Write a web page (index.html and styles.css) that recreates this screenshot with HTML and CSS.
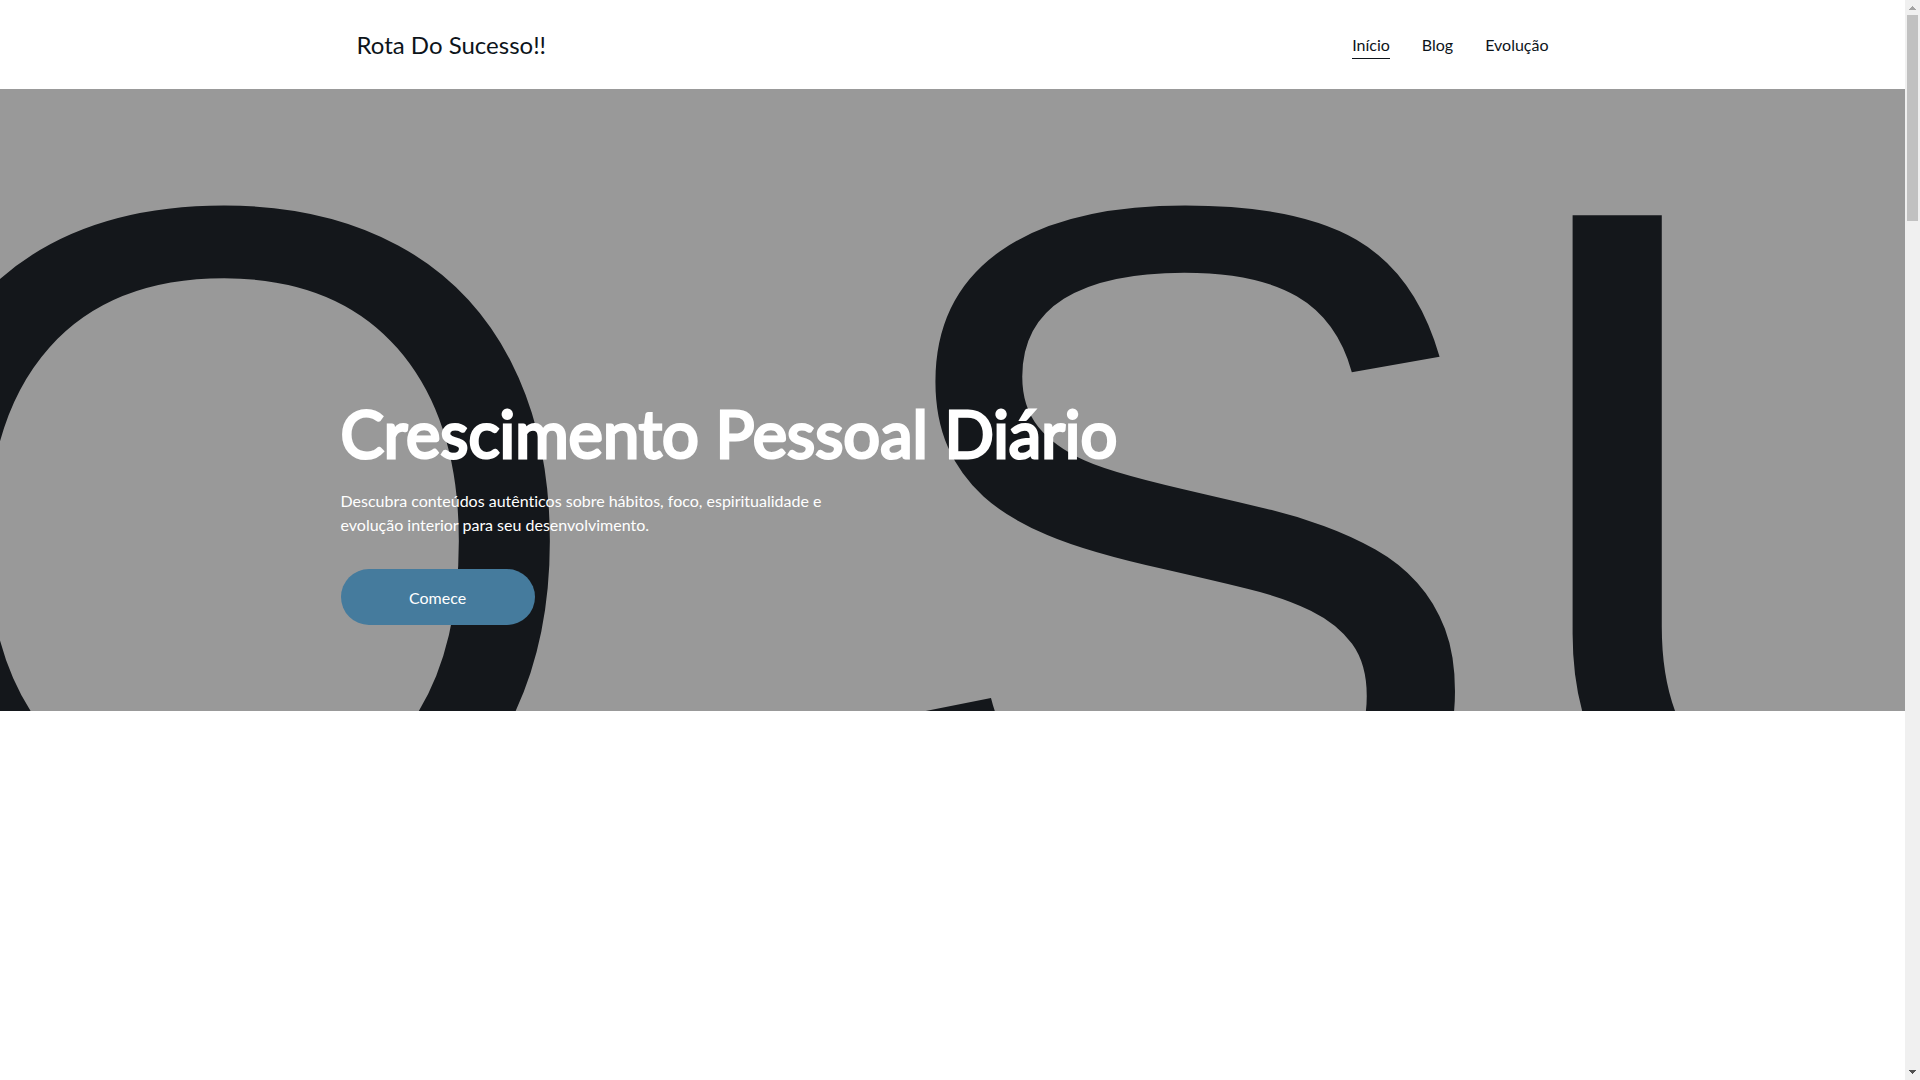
FILE: index.html
```html
<!DOCTYPE html>
<html lang="pt-BR">
<head>
<meta charset="utf-8">
<meta name="viewport" content="width=device-width, initial-scale=1">
<title>Rota Do Sucesso!!</title>
<link rel="stylesheet" href="styles.css">
</head>
<body>
<div class="page">
  <header class="header">
    <div class="container header-inner">
      <a class="logo" href="#">Rota Do Sucesso!!</a>
      <nav class="nav">
        <a class="nav-link active" href="#" aria-current="page">Início</a>
        <a class="nav-link" href="#">Blog</a>
        <a class="nav-link" href="#">Evolução</a>
      </nav>
    </div>
  </header>
  <main>
    <section class="hero">
      <div class="hero-backdrop" aria-hidden="true">O SU</div>
      <div class="container hero-content">
        <h1 class="hero-title">Crescimento Pessoal Diário</h1>
        <p class="hero-text">Descubra conteúdos autênticos sobre hábitos, foco, espiritualidade e evolução interior para seu desenvolvimento.</p>
        <button class="hero-button" type="button">Comece</button>
      </div>
    </section>
  </main>
</div>
<div class="scrollbar" aria-hidden="true">
  <svg class="arrow" width="15" height="15" viewBox="0 0 15 15" shape-rendering="crispEdges"><path fill="#a3a3a3" d="M7 6h1v1h1v1h1v1h1v1H4V9h1V8h1V7h1z"/></svg>
  <div class="thumb"></div>
  <svg class="arrow arrow-down" width="15" height="15" viewBox="0 0 15 15" shape-rendering="crispEdges"><path fill="#505050" d="M4 5h7v1h-1v1H9v1H8v1H7V8H6V7H5V6H4z"/></svg>
</div>
</body>
</html>
```
FILE: styles.css
```css
* {
  box-sizing: border-box;
}

body {
  margin: 0;
  display: grid;
  grid-template-columns: minmax(0, 1fr) 15px;
  height: 100vh;
  overflow: hidden;
  background: #fff;
  color: #0d141a;
  font-family: Lato, "Liberation Sans", sans-serif;
  font-size: 16px;
  line-height: 24px;
  font-variant-ligatures: none;
}

.container {
  width: 100%;
  max-width: 1224px;
  margin: 0 auto;
}

.header-inner {
  display: flex;
  align-items: center;
  justify-content: space-between;
  padding: 28px 16px;
}

.logo {
  color: inherit;
  font-size: 24px;
  line-height: 33px;
  text-decoration: none;
}

.nav {
  display: flex;
  gap: 32px;
}

.nav-link {
  color: inherit;
  text-decoration: none;
  border-bottom: 1px solid transparent;
  padding: 2px 0 1px;
}

.nav-link.active {
  border-color: #0d141a;
}

.hero {
  position: relative;
  overflow: hidden;
  display: flex;
  background: #999;
  color: #fff;
}

/* Oversized lettering behind the hero copy */
.hero-backdrop {
  position: absolute;
  top: -77px;
  left: -148px;
  color: #14171b;
  font-family: "Liberation Sans", Arial, sans-serif;
  font-size: 956px;
  line-height: 1060px;
  white-space: nowrap;
}

.hero-content {
  position: relative;
  padding: 304px 0 86px;
}

.hero-title {
  margin: 0 0 16px;
  font-size: 65px;
  font-weight: 400;
  line-height: 80px;
  -webkit-text-stroke: 3px #fff;
}

.hero-text {
  max-width: 500px;
  margin: 0 0 32px;
}

.hero-button {
  display: block;
  width: 194px;
  height: 56px;
  padding: 2px 0 0;
  border: 0;
  border-radius: 28px;
  background: #457b9d;
  color: #fff;
  font: inherit;
}

.scrollbar {
  display: flex;
  flex-direction: column;
  background: #f0f0f0;
}

.arrow {
  display: block;
}

.thumb {
  height: 206px;
  margin: 0 2px;
  background: #c1c1c1;
}

.arrow-down {
  margin-top: auto;
}
```
